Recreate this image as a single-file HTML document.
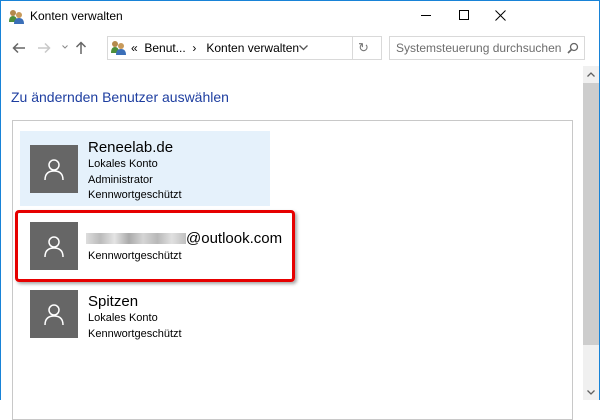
<!DOCTYPE html>
<html><head><meta charset="utf-8"><style>
*{margin:0;padding:0;box-sizing:border-box}
body{width:600px;height:400px;overflow:hidden;background:#fff;font-family:"Liberation Sans",sans-serif;position:relative;color:#000}
.a{position:absolute}
.av{position:absolute;width:48px;height:48px;background:#666}
.av svg{position:absolute;left:12px;top:12px}
.n{font-size:15px;position:absolute}
.s{font-size:11px;position:absolute;line-height:15.5px}
</style></head><body>
<div class="a" style="left:0;top:0;width:1px;height:400px;background:#1883d7"></div>
<div class="a" style="right:0;top:0;width:1px;height:400px;background:#1883d7"></div>
<div class="a" style="left:0;top:0;width:600px;height:1px;background:#1883d7"></div>
<!-- title -->
<svg class="a" style="left:8px;top:8px" width="16" height="16"><circle cx="5" cy="5" r="3" fill="#b48a4c"/><path d="M1 14 Q1 8 5 8 Q9 8 9 14Z" fill="#4d8f3a"/><circle cx="11" cy="7" r="3" fill="#c89a5a"/><path d="M6 16 Q6 10 11 10 Q16 10 16 16Z" fill="#3a6fb8"/></svg>
<div class="a" style="left:30px;top:9px;font-size:12px">Konten verwalten</div>
<div class="a" style="left:421px;top:15px;width:10px;height:1px;background:#000"></div>
<div class="a" style="left:459px;top:10px;width:10px;height:10px;border:1px solid #000"></div>
<svg class="a" style="left:495px;top:10px" width="11" height="11"><path d="M0.5 0.5L10.5 10.5M10.5 0.5L0.5 10.5" stroke="#000" stroke-width="1"/></svg>
<!-- nav -->
<svg class="a" style="left:12px;top:42px" width="14" height="12"><path d="M13 6H2M6 1.5L1.5 6L6 10.5" fill="none" stroke="#666" stroke-width="1.5"/></svg>
<svg class="a" style="left:37px;top:42px" width="14" height="12"><path d="M1 6H12M8 1.5L12.5 6L8 10.5" fill="none" stroke="#c8c8c8" stroke-width="1.5"/></svg>
<svg class="a" style="left:62px;top:45px" width="6" height="4"><path d="M0.5 0.5L3 3L5.5 0.5" fill="none" stroke="#888" stroke-width="1"/></svg>
<svg class="a" style="left:75px;top:41px" width="12" height="14"><path d="M6 13V2M1.5 6L6 1.5L10.5 6" fill="none" stroke="#666" stroke-width="1.5"/></svg>
<div class="a" style="left:107px;top:36px;width:275px;height:24px;border:1px solid #d9d9d9"></div>
<div class="a" style="left:352px;top:37px;width:1px;height:22px;background:#d9d9d9"></div>
<svg class="a" style="left:110px;top:39px" width="16" height="16"><circle cx="5" cy="5" r="3" fill="#b48a4c"/><path d="M1 14 Q1 8 5 8 Q9 8 9 14Z" fill="#4d8f3a"/><circle cx="11" cy="7" r="3" fill="#c89a5a"/><path d="M6 16 Q6 10 11 10 Q16 10 16 16Z" fill="#3a6fb8"/></svg>
<div class="a" style="left:131px;top:41px;font-size:12px">«&nbsp; Benut... &nbsp;›&nbsp;&nbsp; Konten verwalten</div>
<svg class="a" style="left:299px;top:45px" width="9" height="6"><path d="M0.5 0.5L4.5 4.5L8.5 0.5" fill="none" stroke="#555" stroke-width="1.3"/></svg>
<div class="a" style="left:358px;top:40px;font-size:13px;color:#777">↻</div>
<div class="a" style="left:389px;top:36px;width:196px;height:24px;border:1px solid #d9d9d9"></div>
<div class="a" style="left:396px;top:41px;font-size:12px;color:#6d6d6d">Systemsteuerung durchsuchen</div>
<svg class="a" style="left:567px;top:42px" width="12" height="12"><circle cx="7" cy="5" r="3.5" fill="none" stroke="#666" stroke-width="1.3"/><path d="M4.5 7.5 L1 11" stroke="#666" stroke-width="1.6"/></svg>
<!-- scrollbar -->
<div class="a" style="left:583px;top:66px;width:16px;height:334px;background:#f0f0f0"></div>
<div class="a" style="left:583px;top:83px;width:16px;height:262px;background:#cdcdcd"></div>
<svg class="a" style="left:587px;top:72px" width="8" height="5"><path d="M0.5 4.5L4 1L7.5 4.5" fill="none" stroke="#606060" stroke-width="1.3"/></svg>
<svg class="a" style="left:587px;top:390px" width="8" height="5"><path d="M0.5 0.5L4 4L7.5 0.5" fill="none" stroke="#606060" stroke-width="1.3"/></svg>
<!-- content -->
<div class="a" style="left:11px;top:89px;font-size:14px;color:#1e3ea0">Zu ändernden Benutzer auswählen</div>
<div class="a" style="left:12px;top:120px;width:561px;height:300px;border:1px solid #c8c8c8"></div>
<div class="a" style="left:20px;top:131px;width:250px;height:75px;background:#e5f1fb"></div>
<div class="a" style="left:15px;top:210px;width:280px;height:72px;border:3px solid #e60000;border-radius:4px;box-shadow:2px 2px 3px rgba(0,0,0,.35)"></div>
<div class="av" style="left:30px;top:145px"><svg width="24" height="24"><circle cx="12" cy="8" r="5" fill="none" stroke="#fff" stroke-width="1.5"/><path d="M3 23 Q3 14 12 14 Q21 14 21 23" fill="none" stroke="#fff" stroke-width="1.5"/></svg></div>
<div class="n" style="left:88px;top:139px">Reneelab.de</div>
<div class="s" style="left:88px;top:157px">Lokales Konto<br>Administrator<br>Kennwortgeschützt</div>
<div class="av" style="left:30px;top:222px"><svg width="24" height="24"><circle cx="12" cy="8" r="5" fill="none" stroke="#fff" stroke-width="1.5"/><path d="M3 23 Q3 14 12 14 Q21 14 21 23" fill="none" stroke="#fff" stroke-width="1.5"/></svg></div>
<div class="a" style="left:86px;top:233px;width:100px;height:11px;background:linear-gradient(90deg,#ddd,#bbb,#e4e4e4,#aaa,#d5d5d5,#b8b8b8,#e0e0e0,#c0c0c0)"></div>
<div class="n" style="left:186px;top:230px">@outlook.com</div>
<div class="s" style="left:88px;top:249px">Kennwortgeschützt</div>
<div class="av" style="left:30px;top:290px"><svg width="24" height="24"><circle cx="12" cy="8" r="5" fill="none" stroke="#fff" stroke-width="1.5"/><path d="M3 23 Q3 14 12 14 Q21 14 21 23" fill="none" stroke="#fff" stroke-width="1.5"/></svg></div>
<div class="n" style="left:88px;top:293px">Spitzen</div>
<div class="s" style="left:88px;top:311px">Lokales Konto<br>Kennwortgeschützt</div>
</body></html>
